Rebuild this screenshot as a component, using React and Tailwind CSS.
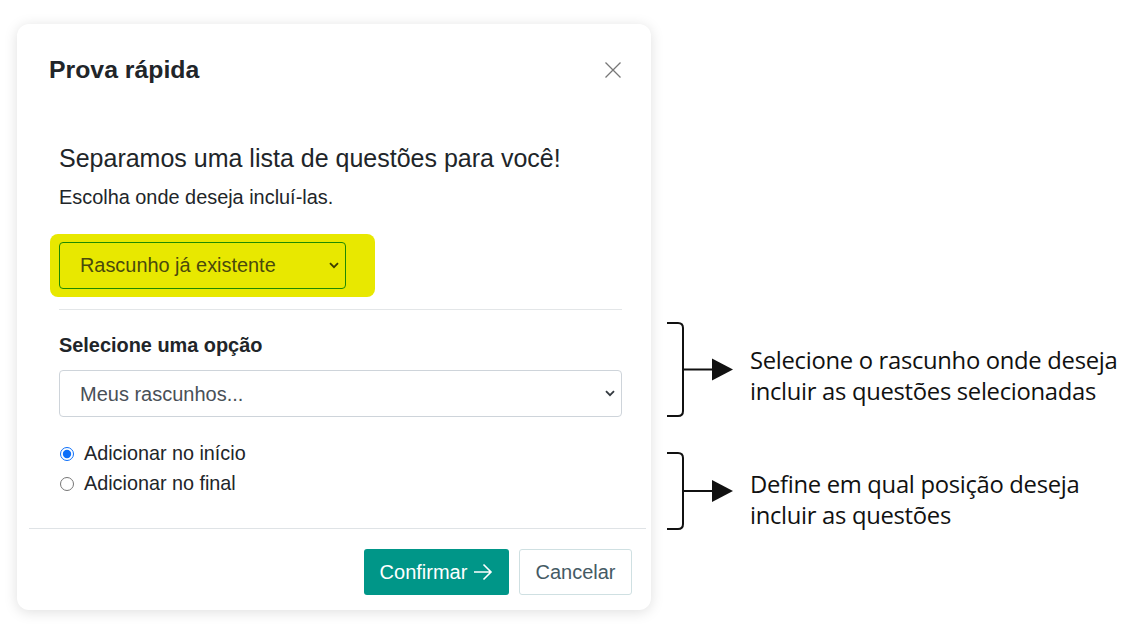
import React from 'react'

// Modal "Prova rápida" com anotações ao lado

function Chevron({ className }) {
  return (
    <svg width="10" height="7" viewBox="0 0 10 7" className={className}>
      <path d="M1 1.2 L5 5.2 L9 1.2" fill="none" stroke="currentColor" strokeWidth="1.8" />
    </svg>
  )
}

function Bracket({ h }) {
  // chave + seta
  const mid = h / 2
  return (
    <svg width="72" height={h + 4} viewBox={`0 0 72 ${h + 4}`} className="shrink-0">
      <path
        d={`M2 2 H13 Q18 2 18 7 V${h - 3} Q18 ${h + 2} 13 ${h + 2} H2`}
        fill="none"
        stroke="#111"
        strokeWidth="2"
      />
      <line x1="18" y1={mid + 2} x2="50" y2={mid + 2} stroke="#111" strokeWidth="2" />
      <polygon points={`47,${mid - 9} 68,${mid + 2} 47,${mid + 13}`} fill="#111" />
    </svg>
  )
}

function Note({ h, lines, className, textClass }) {
  return (
    <div className={'flex items-start ' + className}>
      <Bracket h={h} />
      <div className={"ml-[13px] text-[23.8px] leading-[31px] text-[#111] font-['Open_Sans',sans-serif] tracking-[-0.3px] " + textClass}>
        {lines.map(l => (
          <div key={l} className="whitespace-nowrap">{l}</div>
        ))}
      </div>
    </div>
  )
}

export default function App() {
  return (
    <div className="w-[1126px] h-[643px] bg-white flex font-['Liberation_Sans',Arial,sans-serif] overflow-hidden">
      <div className="ml-[17px] mt-[24px] w-[634px] h-[586px] bg-white rounded-[12px] shadow-[0_2px_14px_rgba(0,0,0,0.13)] flex flex-col">
        {/* header */}
        <div className="flex items-center justify-between pl-[32px] pr-[29px] mt-[34px] h-[24px]">
          <h1 className="text-[24.8px] font-bold text-[#212529] leading-[24px]">Prova rápida</h1>
          <svg width="18" height="18" viewBox="0 0 18 18" className="text-[#777]">
            <path d="M1.5 1.5 L16.5 16.5 M16.5 1.5 L1.5 16.5" stroke="currentColor" strokeWidth="1.3" />
          </svg>
        </div>

        {/* body */}
        <div className="pl-[42px] pr-[29px] pt-[63px]">
          <p className="text-[25px] leading-[26px] text-[#212529] whitespace-nowrap">Separamos uma lista de questões para você!</p>
          <p className="mt-[14px] text-[19.9px] leading-[24px] text-[#212529]">Escolha onde deseja incluí-las.</p>

          <div className="mt-[25px] -ml-[9px] w-[325px] h-[63px] bg-[#e8e800] rounded-[8px] pl-[9px] pt-[8px]">
            <div className="w-[287px] h-[47px] border border-[#1f8a00] rounded-[4px] flex items-center justify-between pl-[20px] pr-[6px]">
              <span className="text-[19.9px] text-[#4a4a0c]">Rascunho já existente</span>
              <Chevron className="text-[#3c3c00]" />
            </div>
          </div>

          <div className="mt-[12px] h-px bg-[#e3e6e8]" />

          <p className="mt-[24px] text-[19.9px] font-bold leading-[22px] text-[#212529]">Selecione uma opção</p>

          <div className="mt-[14px] h-[47px] border border-[#ced4da] rounded-[4px] flex items-center justify-between pl-[20px] pr-[6px]">
            <span className="text-[20px] text-[#495057]">Meus rascunhos...</span>
            <Chevron className="text-[#343a40]" />
          </div>

          <div className="mt-[26px] flex flex-col gap-[8px] text-[19.8px] text-[#212529]">
            <label className="flex items-center h-[22px]">
              <input type="radio" name="pos" defaultChecked className="m-0 w-[14px] h-[14px] ml-[1px] accent-[#0b6ef9]" />
              <span className="ml-[10px]">Adicionar no início</span>
            </label>
            <label className="flex items-center h-[22px]">
              <input type="radio" name="pos" className="m-0 w-[14px] h-[14px] ml-[1px]" />
              <span className="ml-[10px]">Adicionar no final</span>
            </label>
          </div>
        </div>

        {/* footer */}
        <div className="mt-auto ml-[12px] mr-[5px] h-px bg-[#dfe3e6]" />
        <div className="flex justify-end gap-[10px] pr-[19px] pt-[20px] pb-[15px]">
          <button className="h-[46px] w-[145px] rounded-[3px] bg-[#009688] text-white text-[20px] flex items-center justify-center gap-[6px]">
            Confirmar
            <svg width="20" height="18" viewBox="0 0 20 18">
              <path d="M1 9 H18 M10.5 1.5 L18 9 L10.5 16.5" fill="none" stroke="white" strokeWidth="1.6" />
            </svg>
          </button>
          <button className="h-[46px] w-[113px] rounded-[3px] border border-[#cfe0e2] bg-white text-[#455a64] text-[20px]">
            Cancelar
          </button>
        </div>
      </div>

      {/* anotações */}
      <div className="ml-[14px] flex flex-col">
        <Note
          className="mt-[321px]"
          textClass="mt-[24px]"
          h={93}
          lines={['Selecione o rascunho onde deseja', 'incluir as questões selecionadas']}
        />
        <Note
          className="mt-[33px]"
          textClass="mt-[18px]"
          h={76}
          lines={['Define em qual posição deseja', 'incluir as questões']}
        />
      </div>
    </div>
  )
}
